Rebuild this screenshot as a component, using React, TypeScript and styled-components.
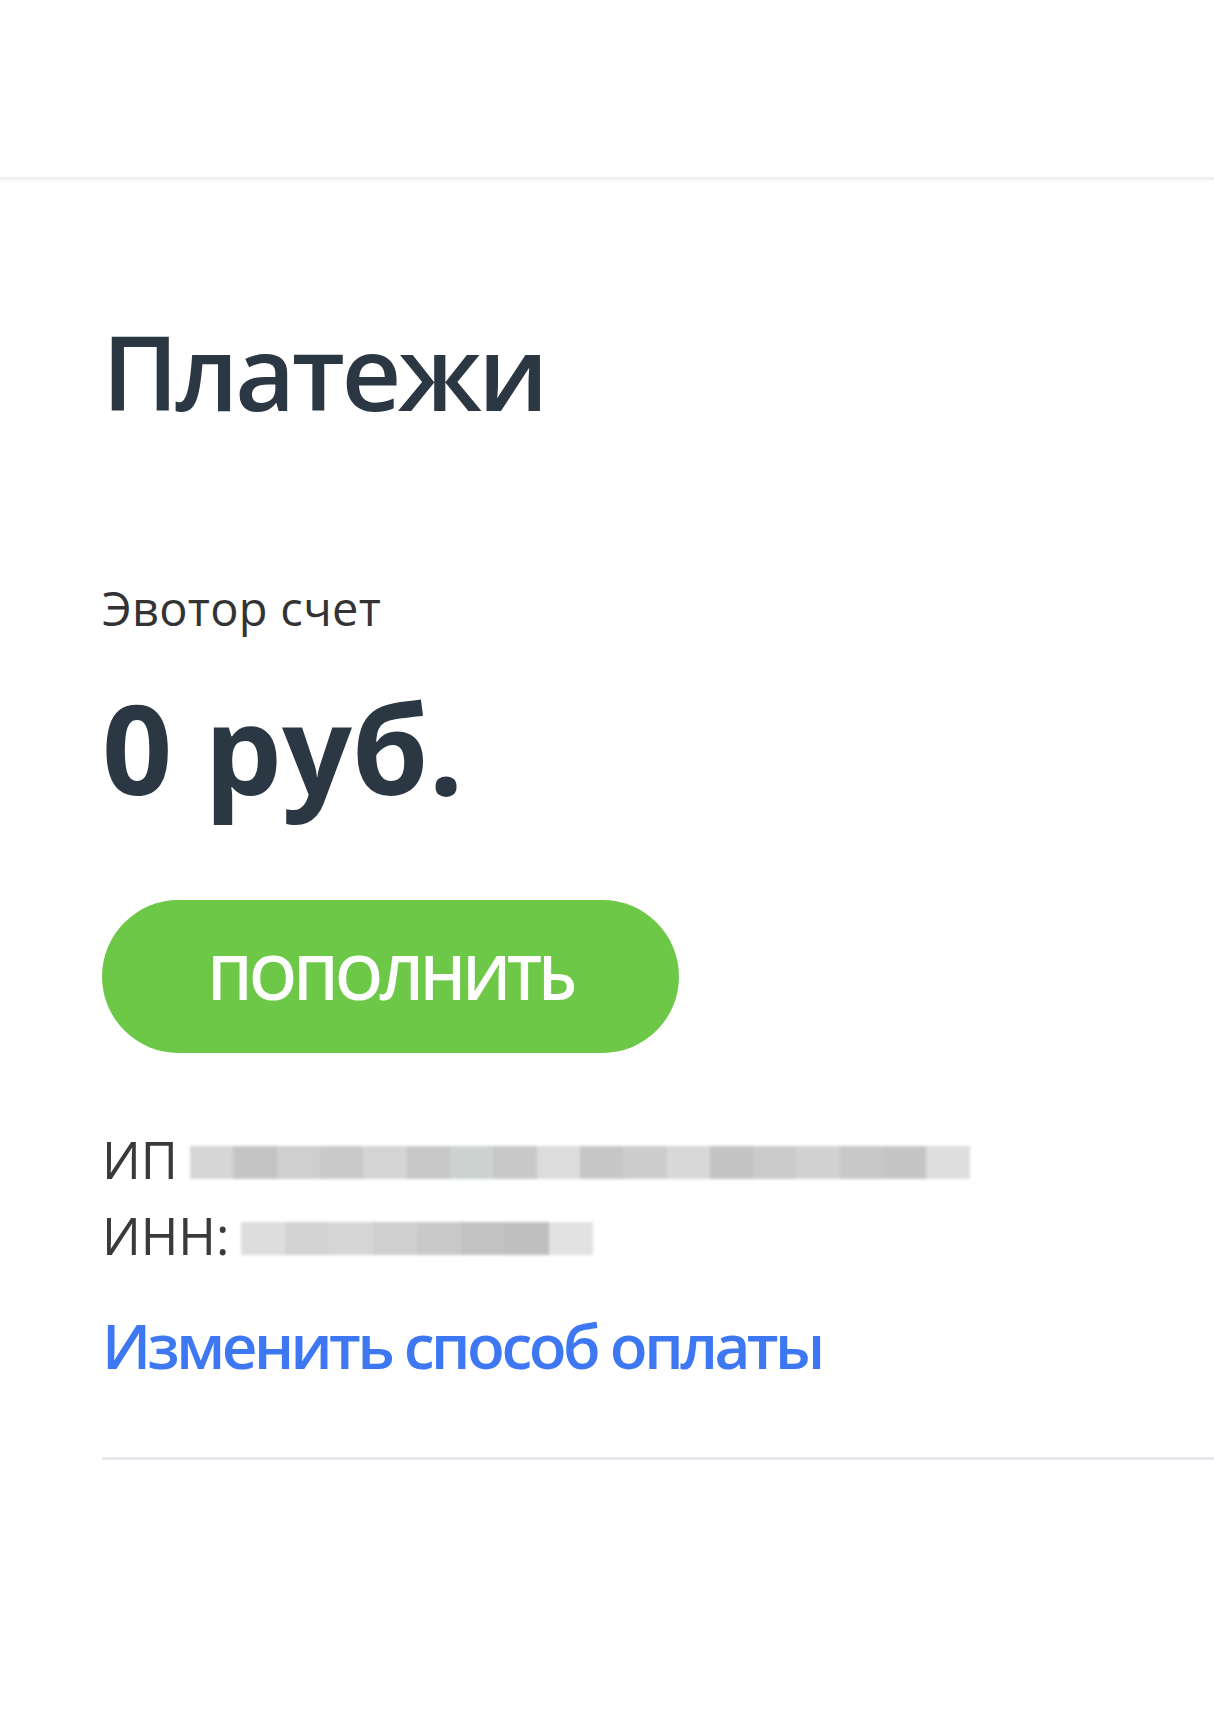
import styled, { createGlobalStyle } from 'styled-components'

const GlobalStyle = createGlobalStyle`
    body {
        margin: 0;
        background: #ffffff;
        font-family: "Open Sans", "Noto Sans", "Liberation Sans", sans-serif;
    }
`

const Header = styled.header`
    height: 177px;
    background: #ffffff;
    border-bottom: 3px solid #f1f1f1;
    box-shadow: 0 2px 2px rgba(0, 0, 0, 0.02);
`

const Content = styled.main`
    padding-left: 102px;
    padding-bottom: 270px;
`

const Title = styled.h1`
    margin: 138px 0 0;
    font-size: 104px;
    line-height: 105px;
    font-weight: 600;
    letter-spacing: -3.5px;
    color: #2b3843;
`

const Label = styled.div`
    margin-top: 162px;
    font-size: 47px;
    line-height: 47px;
    letter-spacing: 0.3px;
    color: #333333;
`

const Amount = styled.div`
    margin-top: 54px;
    font-size: 123px;
    line-height: 123px;
    font-weight: 700;
    color: #2b3843;
`

const TopUp = styled.button`
    display: flex;
    align-items: center;
    justify-content: center;
    margin-top: 91px;
    width: 577px;
    height: 153px;
    border: none;
    border-radius: 77px;
    background: #6cc846;
    color: #ffffff;
    font-family: inherit;
    font-size: 61px;
    font-weight: 600;
    letter-spacing: -3.5px;
    cursor: pointer;
`

const Details = styled.div`
    margin-top: 68px;
    display: flex;
    flex-direction: column;
`

const DetailRow = styled.div`
    display: flex;
    align-items: center;
    gap: 12px;
    height: 76px;
    font-size: 51px;
    color: #3a3a3a;
`

const Redacted = styled.span<{ $width: number }>`
    display: flex;
    width: ${p => p.$width}px;
    height: 33px;
    margin-top: 6px;
    filter: blur(1.5px);
`

const Pixel = styled.span<{ $shade: string }>`
    flex: 1;
    background: ${p => p.$shade};
`

const ChangeLink = styled.a`
    display: block;
    margin-top: 40px;
    font-size: 62px;
    line-height: 65px;
    font-weight: 600;
    letter-spacing: -3.5px;
    color: #3d78f2;
    text-decoration: none;
`

const Divider = styled.hr`
    margin: 79px 0 0;
    border: none;
    height: 3px;
    background: #e8e9ee;
`

const ipShades = ['#d6d6d6', '#c4c4c4', '#cfcfcf', '#c9c9c9', '#d4d4d4', '#c7c7c7', '#ccd2cf', '#c8c8c8', '#dcdcdc', '#c6c6c6', '#cdcdcd', '#d8d8d8', '#c3c3c3', '#cbcbcb', '#d2d2d2', '#c8c8c8', '#c5c5c5', '#dedede']
const innShades = ['#dddddd', '#d3d3d3', '#d6d6d6', '#cfcfcf', '#c9c9c9', '#c2c2c2', '#bfbfbf', '#e2e2e2']

function Blur({ width, shades }: { width: number; shades: string[] }) {
    return (
        <Redacted $width={width}>
            {shades.map((s, i) => <Pixel key={i} $shade={s} />)}
        </Redacted>
    )
}

export default function App() {
    return (
        <>
            <GlobalStyle />
            <Header />
            <Content>
                <Title>Платежи</Title>
                <Label>Эвотор счет</Label>
                <Amount>0 руб.</Amount>
                <TopUp>ПОПОЛНИТЬ</TopUp>
                <Details>
                    <DetailRow>ИП <Blur width={780} shades={ipShades} /></DetailRow>
                    <DetailRow>ИНН: <Blur width={352} shades={innShades} /></DetailRow>
                </Details>
                <ChangeLink href="#">Изменить способ оплаты</ChangeLink>
                <Divider />
            </Content>
        </>
    )
}
